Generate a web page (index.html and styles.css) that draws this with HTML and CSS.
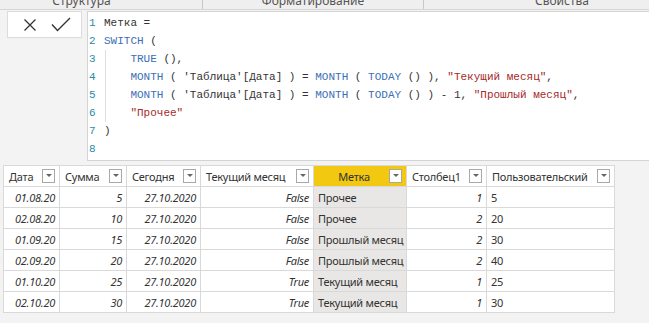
FILE: index.html
```html
<!DOCTYPE html>
<html lang="ru">
<head>
<meta charset="utf-8">
<link rel="stylesheet" href="styles.css">
</head>
<body>
<div class="ribbon">
  <div class="ribbon-sec sec1"><span class="ribbon-label">Структура</span></div>
  <div class="ribbon-sec sec2"><span class="ribbon-label">Форматирование</span></div>
  <div class="ribbon-sec sec3"><span class="ribbon-label">Свойства</span></div>
</div>
<div class="formula">
  <div class="actions">
    <svg class="ico" width="14" height="14" viewBox="0 0 14 14"><path d="M1.5 1.5 L12.5 12.5 M12.5 1.5 L1.5 12.5" stroke="#333" stroke-width="1.3" fill="none"/></svg>
    <svg class="ico" width="20" height="15" viewBox="0 0 20 15"><path d="M1 7.5 L6.5 13.5 L19 1" stroke="#333" stroke-width="1.4" fill="none"/></svg>
  </div>
  <div class="editor">
    <div class="guide"></div>
    <div class="line"><span class="ln">1</span><span class="code">Метка =</span></div>
    <div class="line"><span class="ln">2</span><span class="code"><span class="kw">SWITCH</span> (</span></div>
    <div class="line"><span class="ln">3</span><span class="code">    <span class="kw">TRUE</span> (),</span></div>
    <div class="line"><span class="ln">4</span><span class="code">    <span class="kw">MONTH</span> ( 'Таблица'[Дата] ) = <span class="kw">MONTH</span> ( <span class="kw">TODAY</span> () ), <span class="str">"Текущий месяц"</span>,</span></div>
    <div class="line"><span class="ln">5</span><span class="code">    <span class="kw">MONTH</span> ( 'Таблица'[Дата] ) = <span class="kw">MONTH</span> ( <span class="kw">TODAY</span> () ) - 1, <span class="str">"Прошлый месяц"</span>,</span></div>
    <div class="line"><span class="ln">6</span><span class="code">    <span class="str">"Прочее"</span></span></div>
    <div class="line"><span class="ln">7</span><span class="code">)</span></div>
    <div class="line"><span class="ln">8</span><span class="code"></span></div>
  </div>
</div>
<div class="grid-wrap">
  <table class="grid">
    <colgroup>
      <col class="c1"><col class="c2"><col class="c3"><col class="c4"><col class="c5"><col class="c6"><col class="c7">
    </colgroup>
    <thead>
      <tr>
        <th><div class="hd"><span class="ht">Дата</span><span class="dd"></span></div></th>
        <th><div class="hd"><span class="ht">Сумма</span><span class="dd"></span></div></th>
        <th><div class="hd"><span class="ht">Сегодня</span><span class="dd"></span></div></th>
        <th><div class="hd"><span class="ht">Текущий месяц</span><span class="dd"></span></div></th>
        <th class="sel"><div class="hd"><span class="ht center">Метка</span><span class="dd"></span></div></th>
        <th><div class="hd"><span class="ht">Столбец1</span><span class="dd"></span></div></th>
        <th><div class="hd"><span class="ht">Пользовательский</span><span class="dd"></span></div></th>
      </tr>
    </thead>
    <tbody>
      <tr><td class="r it">01.08.20</td><td class="r it">5</td><td class="r it">27.10.2020</td><td class="r it">False</td><td class="l selc">Прочее</td><td class="r it">1</td><td class="l">5</td></tr>
      <tr><td class="r it">02.08.20</td><td class="r it">10</td><td class="r it">27.10.2020</td><td class="r it">False</td><td class="l selc">Прочее</td><td class="r it">2</td><td class="l">20</td></tr>
      <tr><td class="r it">01.09.20</td><td class="r it">15</td><td class="r it">27.10.2020</td><td class="r it">False</td><td class="l selc">Прошлый месяц</td><td class="r it">2</td><td class="l">30</td></tr>
      <tr><td class="r it">02.09.20</td><td class="r it">20</td><td class="r it">27.10.2020</td><td class="r it">False</td><td class="l selc">Прошлый месяц</td><td class="r it">2</td><td class="l">40</td></tr>
      <tr><td class="r it">01.10.20</td><td class="r it">25</td><td class="r it">27.10.2020</td><td class="r it">True</td><td class="l selc">Текущий месяц</td><td class="r it">1</td><td class="l">25</td></tr>
      <tr><td class="r it">02.10.20</td><td class="r it">30</td><td class="r it">27.10.2020</td><td class="r it">True</td><td class="l selc">Текущий месяц</td><td class="r it">1</td><td class="l">30</td></tr>
    </tbody>
  </table>
</div>
</body>
</html>
```

FILE: styles.css
```css
* { box-sizing: border-box; }
html, body { margin: 0; padding: 0; }
body {
  width: 649px;
  height: 323px;
  overflow: hidden;
  background: #f3f3f3;
  font-family: "Noto Sans", "Liberation Sans", sans-serif;
  color: #333;
}
.ribbon {
  display: flex;
  height: 10px;
  background: #efefef;
  border-bottom: 1px solid #d6d6d6;
  overflow: hidden;
}
.ribbon-sec {
  flex-shrink: 0;
  display: flex;
  justify-content: center;
  height: 9px;
  overflow: hidden;
}
.sec1 { margin-left: -39px; width: 242px; border-right: 1px solid #c8c8c8; }
.sec2 { width: 221px; border-right: 1px solid #c8c8c8; }
.sec3 { width: 276px; }
.ribbon-label {
  font-size: 12px;
  line-height: 12px;
  margin-top: -5px;
  color: #555;
  white-space: nowrap;
}
.formula {
  display: flex;
  align-items: flex-start;
  padding: 1px 0 0 7px;
}
.actions {
  width: 75px;
  height: 27px;
  background: #fff;
  border: 1px solid #dcdcdc;
  display: flex;
  align-items: center;
  padding-left: 15px;
  gap: 14px;
}
.editor {
  position: relative;
  margin-left: 5px;
  flex: 1;
  margin-right: -4px;
  height: 150px;
  background: #fff;
  border: 1px solid #d4d4d4;
  padding-top: 2px;
  font-family: "Liberation Mono", "DejaVu Sans Mono", monospace;
  font-size: 11px;
  color: #333;
}
.guide {
  position: absolute;
  left: 17px;
  top: 38px;
  height: 72px;
  border-left: 1px solid #dedede;
}
.line {
  display: flex;
  height: 18px;
  line-height: 18px;
  white-space: pre;
}
.ln {
  width: 16px;
  padding-left: 1px;
  color: #2b8aa8;
}
.code { white-space: pre; }
.kw { color: #3b6fb6; }
.str { color: #a52a2a; }
.grid-wrap {
  padding: 4px 0 0 3px;
}
.grid {
  border-collapse: collapse;
  table-layout: fixed;
  width: 611px;
  background: #fff;
  font-size: 11px;
  letter-spacing: -0.25px;
  color: #333;
}
.c1 { width: 56px; }
.c2 { width: 67px; }
.c3 { width: 74px; }
.c4 { width: 113px; }
.c5 { width: 93px; }
.c6 { width: 80px; }
.c7 { width: 128px; }
.grid th, .grid td {
  border: 1px solid #d9d9d9;
  height: 21px;
  padding: 0;
  white-space: nowrap;
  overflow: hidden;
}
.grid th {
  font-weight: normal;
  text-align: left;
  background: #fff;
}
.grid th.sel { background: #f2c811; }
.hd {
  display: flex;
  align-items: center;
  padding: 0 4px 0 5px;
}
.ht { flex: 1; }
.ht.center { text-align: center; }
.dd {
  position: relative;
  flex-shrink: 0;
  width: 13px;
  height: 14px;
  border: 1px solid #a8a8a8;
  background: #fff;
}
.dd::after {
  content: "";
  position: absolute;
  left: 3px;
  top: 4px;
  border-left: 3px solid transparent;
  border-right: 3px solid transparent;
  border-top: 3px solid #666;
}
.grid td.r { text-align: right; padding-right: 4px; }
.grid td.l { text-align: left; padding-left: 4px; }
.grid td.it { font-style: italic; }
.grid td.selc { background: #e9e7e5; }
```
